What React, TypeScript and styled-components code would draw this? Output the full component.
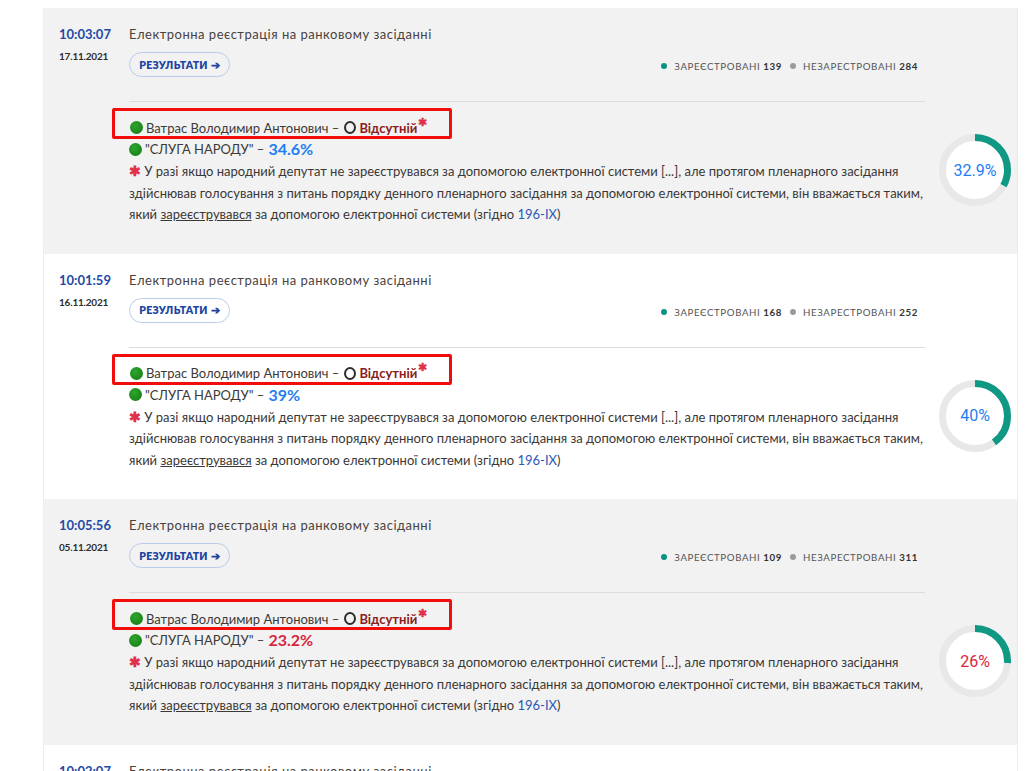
import React from 'react'
import styled, { createGlobalStyle } from 'styled-components'

const GlobalStyle = createGlobalStyle`
    body {
        margin: 0;
        background: #fff;
        font-family: Lato, "Noto Sans", sans-serif;
        color: #3d3a38;
    }
`

interface IRow {
    time: string;
    date: string;
    registered: number;
    unregistered: number;
    party: string;
    bad: boolean;
    chart: string;
    value: number;
}

const rows: IRow[] = [
    { time: '10:03:07', date: '17.11.2021', registered: 139, unregistered: 284, party: '34.6%', bad: false, chart: '32.9%', value: 32.9 },
    { time: '10:01:59', date: '16.11.2021', registered: 168, unregistered: 252, party: '39%', bad: false, chart: '40%', value: 40 },
    { time: '10:05:56', date: '05.11.2021', registered: 109, unregistered: 311, party: '23.2%', bad: true, chart: '26%', value: 26 },
    { time: '10:02:07', date: '03.11.2021', registered: 150, unregistered: 270, party: '30.1%', bad: false, chart: '35.7%', value: 35.7 },
]

const Page = styled.div`
    margin: 8px 0 0 43px;
    width: 975px;
    border-left: 1px solid #ececec;
    border-right: 1px solid #ececec;
    box-sizing: border-box;
`

const Row = styled.div<{ $shade: boolean }>`
    display: grid;
    grid-template-columns: 70px 796px 92px;
    grid-template-rows: auto auto;
    align-content: start;
    padding: 17px 0 0 15px;
    height: 245.5px;
    box-sizing: border-box;
    background: ${p => (p.$shade ? '#f2f2f2' : '#fff')};
`

const TimeCol = styled.div`
    display: flex;
    flex-direction: column;
`

const Time = styled.span`
    font-size: 13px;
    line-height: 18px;
    font-weight: 700;
    color: #1f4aa8;
`

const DateText = styled.span`
    margin-top: 6px;
    font-size: 10px;
    line-height: 14px;
    font-weight: 700;
    color: #2e2e2e;
    letter-spacing: -0.2px;
`

const Head = styled.div`
    display: flex;
    flex-direction: column;
`

const Title = styled.div`
    font-size: 13px;
    line-height: 18px;
    letter-spacing: 0.5px;
    color: #4a423d;
`

const HeadBar = styled.div`
    display: flex;
    align-items: center;
    justify-content: space-between;
    margin-top: 9px;
    padding-right: 7px;
`

const ResultButton = styled.button`
    height: 25px;
    width: 101px;
    border: 1px solid #b9cdea;
    border-radius: 13px;
    background: transparent;
    font-family: Lato, "Noto Sans", sans-serif;
    font-size: 10.5px;
    font-weight: 800;
    letter-spacing: 0.3px;
    color: #1d45a3;
    padding: 0;
    cursor: pointer;
`

const Legend = styled.div`
    display: flex;
    align-items: center;
    font-size: 9.7px;
    letter-spacing: 0.6px;
    color: #555;
    margin-top: 3px;
`

const Dot = styled.span<{ $color: string }>`
    width: 6px;
    height: 6px;
    border-radius: 50%;
    background: ${p => p.$color};
    margin: 0 7px 0 8px;
`

const Count = styled.b`
    color: #333;
    margin-left: 3px;
`

const Body = styled.div`
    grid-column: 2;
    display: flex;
    flex-direction: column;
`

const Divider = styled.div`
    margin-top: 24px;
    height: 1px;
    background: #dcdcdc;
`

const Highlight = styled.div`
    align-self: flex-start;
    display: flex;
    align-items: center;
    margin: 6px 0 0 -17px;
    padding: 8px 22px 0 15px;
    border: 3px solid #f20d0d;
    border-radius: 2px;
    height: 31px;
    box-sizing: border-box;
`

const Line = styled.div`
    display: flex;
    align-items: center;
    font-size: 13px;
    line-height: 20px;
    letter-spacing: 0;
    color: #3d3a38;
`

const GreenDot = styled.span`
    width: 13px;
    height: 13px;
    border-radius: 50%;
    background: radial-gradient(circle at 40% 35%, #2ea52e, #1a861a 70%);
    margin-right: 3px;
    flex-shrink: 0;
`

const Ring = styled.span`
    width: 8px;
    height: 9px;
    border: 2px solid #2e2e2e;
    border-radius: 50%;
    margin: 0 3px 0 5px;
`

const Absent = styled.b`
    color: #8b1c22;
    font-weight: 700;
`

const Star = styled.span`
    align-self: flex-start;
    margin-top: -3px;
    color: #e0304a;
    font-weight: 700;
    font-size: 11px;
    line-height: 14px;
    margin-left: 1px;
`

const Percent = styled.span<{ $bad: boolean }>`
    margin-left: 4px;
    font-size: 16px;
    font-weight: 700;
    color: ${p => (p.$bad ? '#d7263d' : '#1e7ef0')};
`

const Note = styled.p`
    margin: 1px 0 0;
    font-size: 13px;
    line-height: 21.5px;
    color: #3b3836;
`

const NoteStar = styled.span`
    color: #e0304a;
    font-weight: 700;
    font-size: 14px;
`

const Under = styled.span`
    text-decoration: underline;
`

const LawLink = styled.a`
    color: #2a56b8;
    text-decoration: none;
`

const ChartBox = styled.div`
    grid-column: 3;
    align-self: start;
    margin: 57px 0 0 14px;
    position: relative;
    width: 72px;
    height: 72px;
`

const ChartLabel = styled.span<{ $bad: boolean }>`
    position: absolute;
    inset: 0;
    display: flex;
    align-items: center;
    justify-content: center;
    font-family: Roboto, "Liberation Sans", sans-serif;
    font-size: 16px;
    color: ${p => (p.$bad ? '#d7263d' : '#1e7ef0')};
`

const Chart = ({ value, label, bad }: { value: number; label: string; bad: boolean }) => {
    const r = 32.5
    const c = 2 * Math.PI * r
    return (
        <ChartBox>
            <svg width='72' height='72' viewBox='0 0 72 72'>
                <circle cx='36' cy='36' r={r} fill='#fff' stroke='#e8e8e8' strokeWidth='7' />
                <circle
                    cx='36'
                    cy='36'
                    r={r}
                    fill='none'
                    stroke='#0f9884'
                    strokeWidth='7'
                    strokeDasharray={`${(c * value) / 100} ${c}`}
                    transform='rotate(-90 36 36)'
                />
            </svg>
            <ChartLabel $bad={bad}>{label}</ChartLabel>
        </ChartBox>
    )
}

const Session = ({ data, shade }: { data: IRow; shade: boolean }) => (
    <Row $shade={shade}>
        <TimeCol>
            <Time>{data.time}</Time>
            <DateText>{data.date}</DateText>
        </TimeCol>
        <Head>
            <Title>Електронна реєстрація на ранковому засіданні</Title>
            <HeadBar>
                <ResultButton>РЕЗУЛЬТАТИ ➔</ResultButton>
                <Legend>
                    <Dot $color='#0a9384' />
                    ЗАРЕЄСТРОВАНІ<Count>{data.registered}</Count>
                    <Dot $color='#9a9a9a' />
                    НЕЗАРЕСТРОВАНІ<Count>{data.unregistered}</Count>
                </Legend>
            </HeadBar>
        </Head>
        <div />
        <div />
        <Body>
            <Divider />
            <Highlight>
                <Line>
                    <GreenDot />
                    Ватрас Володимир Антонович –<Ring />
                    <Absent>Відсутній</Absent>
                    <Star>✱</Star>
                </Line>
            </Highlight>
            <Line>
                <GreenDot />
                "СЛУГА НАРОДУ" –<Percent $bad={data.bad}>{data.party}</Percent>
            </Line>
            <Note>
                <NoteStar>✱</NoteStar> У разі якщо народний депутат не зареєструвався за допомогою електронної системи [...], але протягом
                пленарного засідання здійснював голосування з питань порядку денного пленарного засідання за допомогою електронної
                системи, він вважається таким, який <Under>зареєструвався</Under> за допомогою електронної системи (згідно{' '}
                <LawLink>196-IX</LawLink>)
            </Note>
        </Body>
        <Chart value={data.value} label={data.chart} bad={data.bad} />
    </Row>
)

const App: React.FunctionComponent = () => (
    <>
        <GlobalStyle />
        <Page>
            {rows.map((row, i) => (
                <Session key={row.time} data={row} shade={i % 2 === 0} />
            ))}
        </Page>
    </>
)

export default App
